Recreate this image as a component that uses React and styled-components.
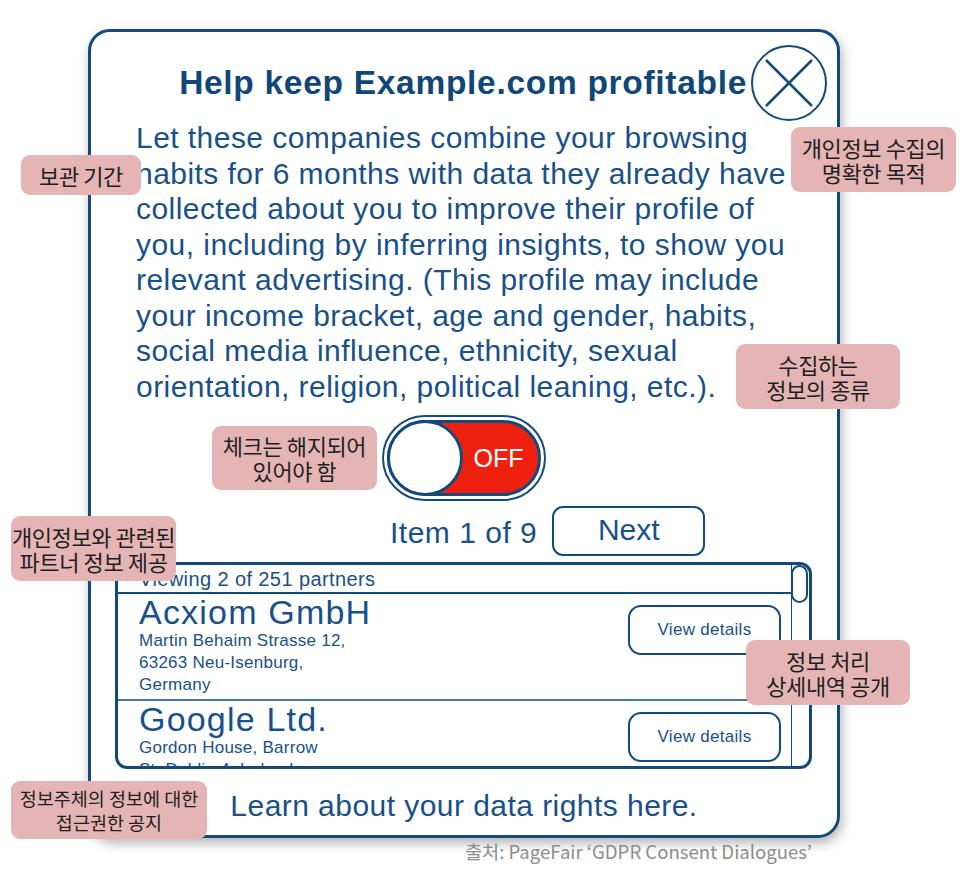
import styled, { createGlobalStyle } from "styled-components";

const NAVY = "#124a7e";
const INK = "#17508a";
const RULE = "#4677a6";

const GlobalStyle = createGlobalStyle`
  html, body {
    margin: 0;
    padding: 0;
    background: #ffffff;
  }
  body {
    font-family: "Liberation Sans", Arial, sans-serif;
  }
`;

const notes = [
  { top: 155, left: 21, width: 120, height: 40, lines: ["보관 기간"] },
  { top: 127, left: 791, width: 165, height: 65, lines: ["개인정보 수집의", "명확한 목적"] },
  { top: 344, left: 736, width: 164, height: 65, lines: ["수집하는", "정보의 종류"] },
  { top: 426, left: 212, width: 165, height: 64, lines: ["체크는 해지되어", "있어야 함"] },
  { top: 516, left: 11, width: 165, height: 65, lines: ["개인정보와 관련된", "파트너 정보 제공"] },
  { top: 640, left: 746, width: 164, height: 65, lines: ["정보 처리", "상세내역 공개"] },
  { top: 781, left: 11, width: 196, height: 58, lines: ["정보주체의 정보에 대한", "접근권한 공지"], small: true },
];

const partners = [
  {
    name: "Acxiom GmbH",
    address: ["Martin Behaim Strasse 12,", "63263 Neu-Isenburg,", "Germany"],
  },
  {
    name: "Google Ltd.",
    address: ["Gordon House, Barrow", "St. Dublin 4, Ireland"],
  },
];

export default function App() {
  return (
    <>
      <GlobalStyle />
      <Page>
        <Dialog>
          <Header>
            <Title>Help keep Example.com profitable</Title>
            <CloseButton aria-label="Close">
              <svg width="76" height="76" viewBox="0 0 76 76">
                <circle cx="38" cy="38" r="37" fill="none" stroke={NAVY} strokeWidth="2" />
                <line x1="15" y1="15" x2="61" y2="61" stroke={NAVY} strokeWidth="2.5" />
                <line x1="61" y1="15" x2="15" y2="61" stroke={NAVY} strokeWidth="2.5" />
              </svg>
            </CloseButton>
          </Header>

          <Body>
            Let these companies combine your browsing<br />
            habits for 6 months with data they already have<br />
            collected about you to improve their profile of<br />
            you, including by inferring insights, to show you<br />
            relevant advertising. (This profile may include<br />
            your income bracket, age and gender, habits,<br />
            social media influence, ethnicity, sexual<br />
            orientation, religion, political leaning, etc.).
          </Body>

          <ToggleRow>
            <ToggleFrame>
              <ToggleTrack>
                <Knob />
                <ToggleLabel>OFF</ToggleLabel>
              </ToggleTrack>
            </ToggleFrame>
          </ToggleRow>

          <Pager>
            <PagerText>Item 1 of 9</PagerText>
            <NextButton>Next</NextButton>
          </Pager>

          <PartnerBox>
            <PartnerScroll>
              <PartnerHeader>Viewing 2 of 251 partners</PartnerHeader>
              {partners.map((p) => (
                <PartnerRow key={p.name}>
                  <PartnerInfo>
                    <PartnerName>{p.name}</PartnerName>
                    {p.address.map((line) => (
                      <PartnerAddress key={line}>{line}</PartnerAddress>
                    ))}
                  </PartnerInfo>
                  <DetailsButton>View details</DetailsButton>
                </PartnerRow>
              ))}
            </PartnerScroll>
            <ScrollTrack>
              <ScrollThumb />
            </ScrollTrack>
          </PartnerBox>

          <RightsLink>Learn about your data rights here.</RightsLink>
        </Dialog>

        <Caption>출처: PageFair ‘GDPR Consent Dialogues’</Caption>

        {notes.map((n) => (
          <Note
            key={n.lines[0]}
            style={{ top: n.top, left: n.left, width: n.width, height: n.height }}
            $small={n.small}
          >
            {n.lines.map((l) => (
              <span key={l}>{l}</span>
            ))}
          </Note>
        ))}
      </Page>
    </>
  );
}

const Page = styled.div`
  position: relative;
  width: 970px;
  height: 874px;
  padding: 29px 0 0 88px;
  box-sizing: border-box;
  overflow: hidden;
`;

const Dialog = styled.div`
  width: 752px;
  height: 809px;
  box-sizing: border-box;
  border: 3px solid ${NAVY};
  border-radius: 22px;
  background: #ffffff;
  box-shadow: 2px 5px 12px rgba(0, 0, 0, 0.3);
  display: flex;
  flex-direction: column;
`;

const Header = styled.div`
  display: flex;
  align-items: center;
  justify-content: flex-end;
  gap: 4px;
  padding: 13px 10px 0 0;
`;

const Title = styled.h1`
  margin: 0;
  font-size: 33.5px;
  font-weight: 700;
  letter-spacing: 0.7px;
  color: #0f4778;
  white-space: nowrap;
`;

const CloseButton = styled.div`
  width: 76px;
  height: 76px;
  display: flex;

  svg {
    display: block;
  }
`;

const Body = styled.p`
  margin: -1px 0 0;
  padding-left: 45px;
  font-size: 30px;
  line-height: 35.5px;
  letter-spacing: 0.45px;
  color: ${INK};
  white-space: nowrap;
`;

const ToggleRow = styled.div`
  display: flex;
  justify-content: center;
  margin-top: 11px;
`;

const ToggleFrame = styled.div`
  display: flex;
  padding: 3px;
  border: 2px solid ${NAVY};
  border-radius: 50px;
`;

const ToggleTrack = styled.div`
  width: 154px;
  height: 76px;
  box-sizing: border-box;
  display: flex;
  align-items: center;
  background: #ee2110;
  border: 3px solid ${NAVY};
  border-radius: 40px;
`;

const Knob = styled.div`
  width: 76px;
  height: 76px;
  box-sizing: border-box;
  margin-left: -3px;
  border-radius: 50%;
  background: #ffffff;
  border: 3px solid ${NAVY};
`;

const ToggleLabel = styled.span`
  flex: 1;
  text-align: center;
  padding-right: 4px;
  font-size: 25px;
  color: #ffffff;
`;

const Pager = styled.div`
  display: flex;
  align-items: center;
  gap: 15px;
  margin-top: 5px;
  padding-left: 299px;
`;

const PagerText = styled.span`
  font-size: 30px;
  letter-spacing: 0.5px;
  color: ${INK};
  padding-top: 3px;
`;

const NextButton = styled.button`
  width: 153px;
  height: 50px;
  box-sizing: border-box;
  border: 2.5px solid ${NAVY};
  border-radius: 11px;
  background: #ffffff;
  font-family: "Liberation Sans", Arial, sans-serif;
  font-size: 30px;
  color: ${INK};
  padding: 0 0 2px;
`;

const PartnerBox = styled.div`
  display: flex;
  height: 207px;
  box-sizing: border-box;
  margin: 6px 25px 0 24px;
  border: 3px solid ${NAVY};
  border-radius: 12px;
  overflow: hidden;
`;

const PartnerScroll = styled.div`
  flex: 1;
  overflow: hidden;
`;

const PartnerHeader = styled.div`
  height: 27px;
  padding-left: 21px;
  font-size: 20px;
  line-height: 29px;
  letter-spacing: 0.4px;
  color: ${INK};
  border-bottom: 2px solid ${NAVY};
  white-space: nowrap;
`;

const PartnerRow = styled.div`
  display: flex;
  justify-content: space-between;
  align-items: flex-start;
  padding: 2px 10px 3px 21px;
  border-bottom: 2px solid ${RULE};
`;

const PartnerInfo = styled.div`
  display: flex;
  flex-direction: column;
`;

const PartnerName = styled.div`
  font-size: 34px;
  line-height: 32px;
  letter-spacing: 1.2px;
  color: ${INK};
  margin-bottom: 2px;
  white-space: nowrap;
`;

const PartnerAddress = styled.div`
  font-size: 17px;
  line-height: 22px;
  letter-spacing: 0.25px;
  color: ${INK};
  white-space: nowrap;
`;

const DetailsButton = styled.button`
  width: 153px;
  height: 50px;
  margin-top: 9px;
  box-sizing: border-box;
  border: 2px solid ${NAVY};
  border-radius: 13px;
  background: #ffffff;
  font-family: "Liberation Sans", Arial, sans-serif;
  font-size: 17px;
  letter-spacing: 0.3px;
  color: ${INK};
`;

const ScrollTrack = styled.div`
  width: 17px;
  border-left: 1.5px solid ${NAVY};
`;

const ScrollThumb = styled.div`
  width: 17px;
  height: 38px;
  box-sizing: border-box;
  margin-left: -1.5px;
  border: 2px solid ${NAVY};
  border-radius: 9px;
  background: #ffffff;
`;

const RightsLink = styled.div`
  margin-top: 19px;
  text-align: center;
  font-size: 30px;
  line-height: 36px;
  letter-spacing: 0.45px;
  color: ${INK};
`;

const Caption = styled.div`
  width: 724px;
  margin-top: 1px;
  text-align: right;
  font-family: "Noto Sans CJK KR", "Noto Sans", sans-serif;
  font-size: 18.6px;
  line-height: 24px;
  color: #8c8c8c;
`;

const Note = styled.div`
  position: absolute;
  box-sizing: border-box;
  display: flex;
  flex-direction: column;
  align-items: center;
  justify-content: center;
  background: #e4b5b4;
  border-radius: 9px;
  font-family: "Noto Sans CJK KR", sans-serif;
  font-size: ${(p) => (p.$small ? "18.5px" : "22px")};
  letter-spacing: ${(p) => (p.$small ? "0" : "-0.4px")};
  line-height: ${(p) => (p.$small ? "24px" : "25px")};
  color: #1e1e1e;
  white-space: nowrap;
`;
